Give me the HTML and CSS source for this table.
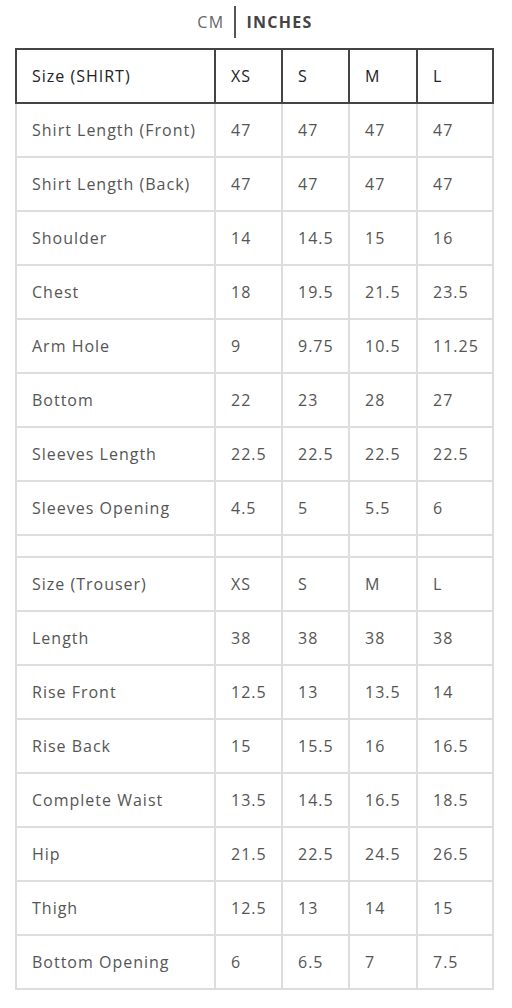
FILE: index.html
```html
<!DOCTYPE html>
<html>
<head>
<meta charset="utf-8">
<link rel="stylesheet" href="styles.css">
</head>
<body>
<div class="toggle">
  <span class="unit">CM</span>
  <span class="sep"></span>
  <span class="unit active">INCHES</span>
</div>
<table class="size-table">
  <colgroup>
    <col class="c1"><col class="c2"><col class="c3"><col class="c4"><col class="c5">
  </colgroup>
  <thead>
    <tr><th>Size (SHIRT)</th><th>XS</th><th>S</th><th>M</th><th>L</th></tr>
  </thead>
  <tbody>
    <tr><td>Shirt Length (Front)</td><td>47</td><td>47</td><td>47</td><td>47</td></tr>
    <tr><td>Shirt Length (Back)</td><td>47</td><td>47</td><td>47</td><td>47</td></tr>
    <tr><td>Shoulder</td><td>14</td><td>14.5</td><td>15</td><td>16</td></tr>
    <tr><td>Chest</td><td>18</td><td>19.5</td><td>21.5</td><td>23.5</td></tr>
    <tr><td>Arm Hole</td><td>9</td><td>9.75</td><td>10.5</td><td>11.25</td></tr>
    <tr><td>Bottom</td><td>22</td><td>23</td><td>28</td><td>27</td></tr>
    <tr><td>Sleeves Length</td><td>22.5</td><td>22.5</td><td>22.5</td><td>22.5</td></tr>
    <tr><td>Sleeves Opening</td><td>4.5</td><td>5</td><td>5.5</td><td>6</td></tr>
    <tr class="spacer"><td></td><td></td><td></td><td></td><td></td></tr>
    <tr><td>Size (Trouser)</td><td>XS</td><td>S</td><td>M</td><td>L</td></tr>
    <tr><td>Length</td><td>38</td><td>38</td><td>38</td><td>38</td></tr>
    <tr><td>Rise Front</td><td>12.5</td><td>13</td><td>13.5</td><td>14</td></tr>
    <tr><td>Rise Back</td><td>15</td><td>15.5</td><td>16</td><td>16.5</td></tr>
    <tr><td>Complete Waist</td><td>13.5</td><td>14.5</td><td>16.5</td><td>18.5</td></tr>
    <tr><td>Hip</td><td>21.5</td><td>22.5</td><td>24.5</td><td>26.5</td></tr>
    <tr><td>Thigh</td><td>12.5</td><td>13</td><td>14</td><td>15</td></tr>
    <tr><td>Bottom Opening</td><td>6</td><td>6.5</td><td>7</td><td>7.5</td></tr>
  </tbody>
</table>
</body>
</html>
```
FILE: styles.css
```css
html, body {
  margin: 0;
  padding: 0;
  background: #fff;
}
body {
  font-family: "Open Sans", "Noto Sans", sans-serif;
  color: #555;
}
.toggle {
  display: flex;
  justify-content: center;
  align-items: center;
  height: 44px;
  gap: 10px;
  padding-right: 2px;
}
.unit {
  font-size: 16px;
  letter-spacing: 1.3px;
  color: #666;
}
.unit.active {
  font-weight: 700;
  color: #444;
}
.sep {
  width: 2px;
  height: 32px;
  background: #555;
}
.size-table {
  margin-left: 15px;
  margin-top: 4px;
  border-collapse: collapse;
  table-layout: fixed;
  width: 477px;
  font-size: 16px;
  letter-spacing: 1px;
}
.c1 { width: 199px; }
.c2 { width: 67px; }
.c3 { width: 67px; }
.c4 { width: 68px; }
.c5 { width: 76px; }
th, td {
  border: 2px solid #ddd;
  height: 54px;
  padding: 0 0 0 15px;
  text-align: left;
  vertical-align: middle;
  box-sizing: border-box;
  white-space: nowrap;
}
th {
  border: 2px solid #444;
  color: #222;
  font-weight: 400;
}
td {
  color: #555;
}
.spacer td {
  height: 22px;
}
```
